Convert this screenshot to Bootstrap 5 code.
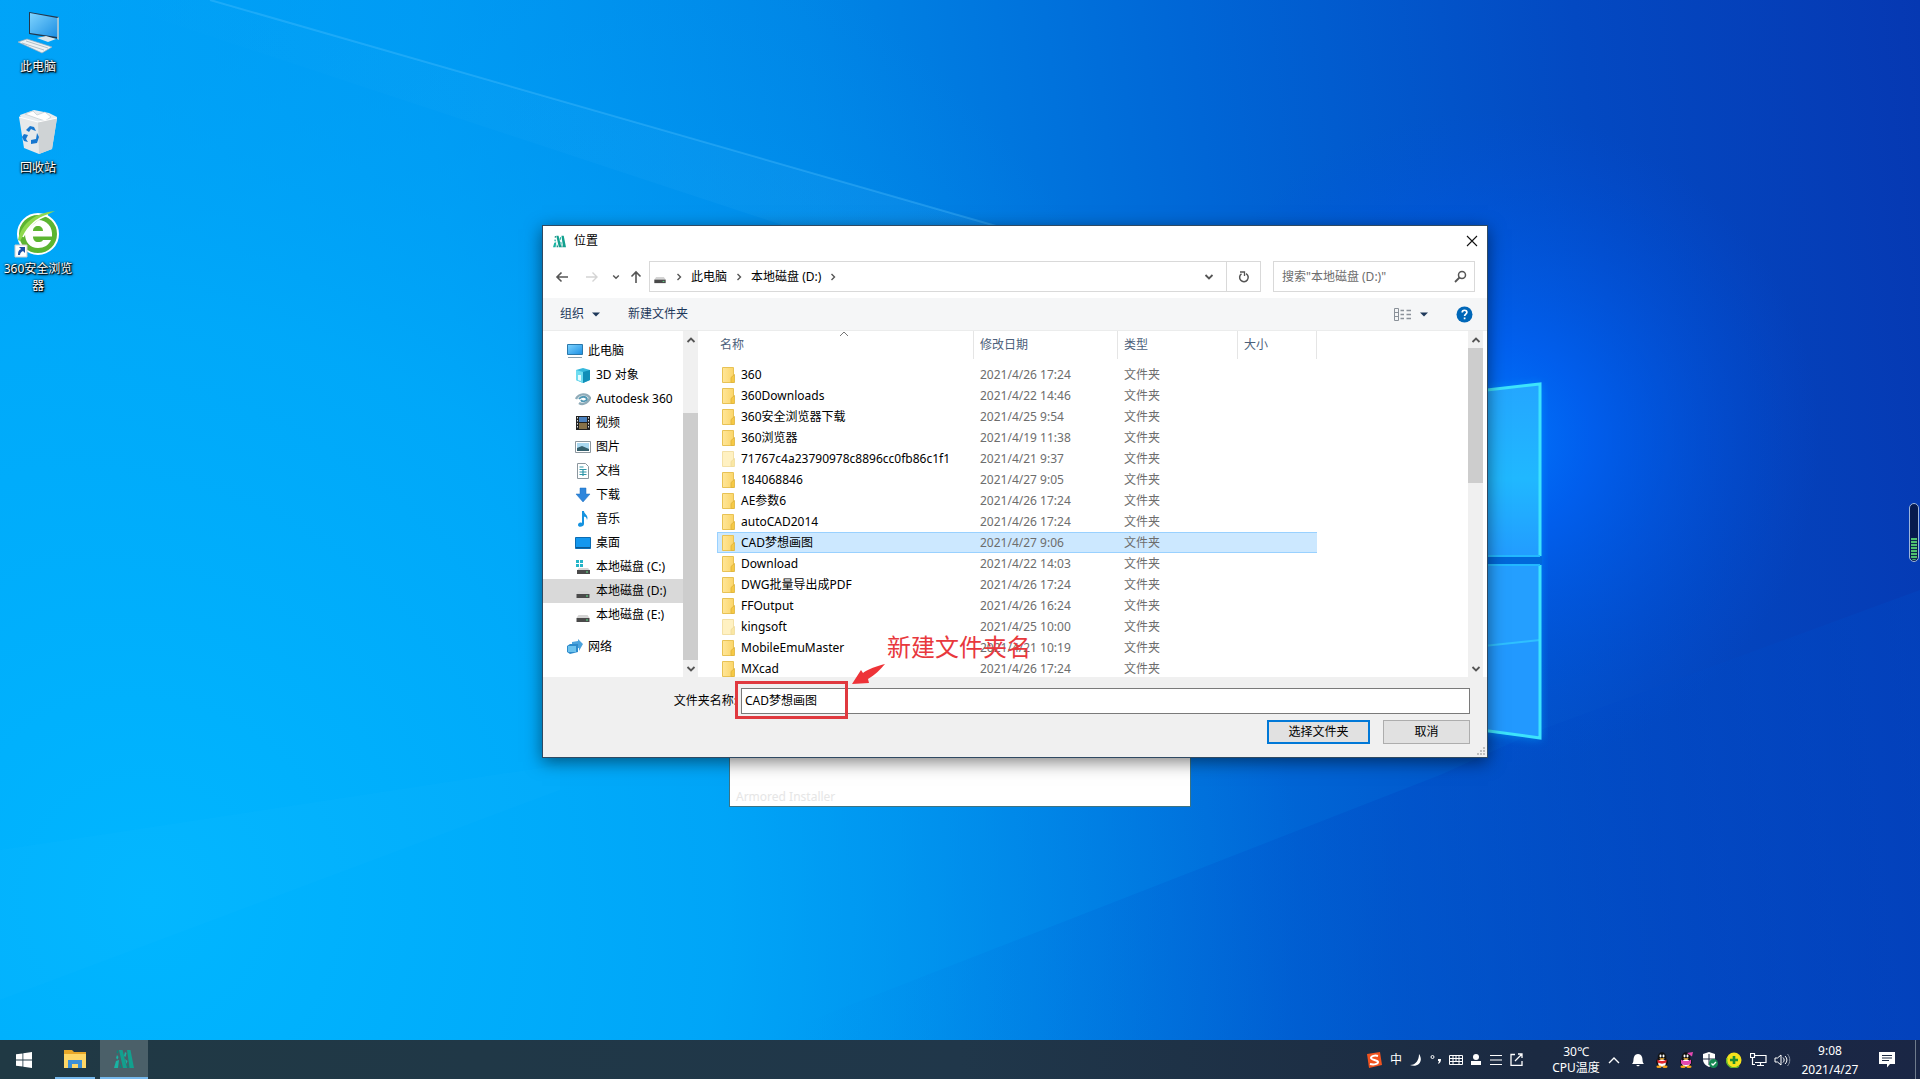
<!DOCTYPE html>
<html lang="zh-CN">
<head>
<meta charset="utf-8">
<meta name="viewport" content="width=device-width, initial-scale=1">
<title>位置</title>
<link href="https://cdn.jsdelivr.net/npm/bootstrap@5.3.0/dist/css/bootstrap.min.css" rel="stylesheet">
<style>
  body { font: 12px/20px "Noto Sans", "Noto Sans CJK SC", sans-serif; color: #000; background: #00a8fa; }
  svg { display: block; flex: none; }
  button { border: 0; background: none; padding: 0; color: inherit; }
  .wallpaper { position: absolute; inset: 0; width: 100%; height: 100%; }

  /* desktop shortcuts */
  .shortcuts { position: relative; width: 76px; padding-top: 8px; gap: 10px; }
  .shortcut { min-height: 91px; color: #fff; text-decoration: none; line-height: 17px; text-shadow: 1px 1px 1px #000, 0 0 2px #000, 1px 1px 3px #000; }
  .shortcut svg { margin-bottom: 2px; }

  /* windows */
  .installer { position: absolute; left: 729px; top: 600px; width: 462px; height: 207px; background: #fff; border: 1px solid #3b7384; padding: 0 6px; color: #e6e6e6; line-height: 18px; }
  .dialog-win { position: absolute; left: 542px; top: 225px; width: 946px; background: #fff; border: 1px solid #2f4a63; box-shadow: 0 4px 16px rgba(0,0,0,.5); }
  .title-row { height: 30px; padding: 0 9px 0 10px; }
  .path-row { height: 42px; padding: 5px 12px 6px 5px; }
  .path-row .nav-b { height: 31px; display: flex; align-items: center; justify-content: center; }
  .w-back { width: 28px; } .w-fwd { width: 32px; } .w-hist { width: 16px; } .w-up { width: 24px; margin-right: 1px; }
  .path-box, .search-box { border: 1px solid #d9d9d9; height: 31px; }
  .path-box { padding-left: 3px; }
  .chev { width: 24px; display: flex; justify-content: center; }
  .refresh { width: 34px; height: 29px; border-left: 1px solid #d9d9d9; }
  .search-box { width: 202px; margin-left: 12px; padding: 0 7px 0 8px; }
  .search-box input { border: 0; outline: 0; width: 100%; min-width: 0; padding: 0; background: none; }
  .search-box input::placeholder { color: #6d6d6d; opacity: 1; }
  .tool-row { height: 33px; background: #f5f6f7; border-bottom: 1px solid #ebecec; padding: 0 14px 0 17px; color: #1e395b; }
  .panes { height: 346px; overflow: hidden; }

  .tree { width: 140px; padding-top: 8px; }
  .tree a { height: 24px; line-height: 24px; display: flex; align-items: center; gap: 5px; padding-left: 32px; color: #000; text-decoration: none; white-space: nowrap; }
  .tree a.root { padding-left: 24px; }
  .tree a.on { background: #d9d9d9; }
  .tree a.net { margin-top: 8px; }
  .sbar { width: 15px; background: #f0f0f0; }
  .sbar .cap { height: 17px; display: flex; align-items: center; justify-content: center; }
  .thumb { background: #cdcdcd; }
  .thumb.low { margin-top: 65px; height: 247px; }
  .thumb.high { height: 135px; }

  .files { padding-left: 19px; position: relative; }
  .files table { width: 600px; table-layout: fixed; border-collapse: separate; border-spacing: 0; }
  .files th { height: 28px; font-weight: 400; color: #4c607a; border-right: 1px solid #e5e5e5; padding: 0 0 0 6px; }
  .files th:first-child { padding-left: 3px; }
  .files .gap-row td { height: 5px; }
  .files td { height: 21px; line-height: 19px; padding: 0 0 0 6px; color: #6d6d6d; border: solid transparent; border-width: 1px 0; white-space: nowrap; }
  .files td:first-child { color: #000; padding-left: 4px; border-left-width: 1px; }
  .files .gap-row td { border: 0; }
  .files tr.sel td { background: #cce8ff; border-color: #99d1ff; }
  .files td svg { display: inline-block; vertical-align: -4px; margin-right: 5px; }
  .c1 { width: 257px; } .c2 { width: 144px; } .c3 { width: 120px; } .c4 { width: 79px; }
  .sort { position: absolute; left: 141px; top: 0; }

  .foot { position: relative; background: #f0f0f0; padding: 11px 17px 13px 0; }
  .foot label { width: 198px; text-align: right; padding-right: 4px; white-space: nowrap; }
  .foot input { height: 26px; border: 1px solid #7a7a7a; padding: 0 3px 2px; background: #fff; outline: 0; }
  .foot .acts { margin-top: 6px; gap: 13px; }
  .foot .acts button { height: 24px; line-height: 20px; background: #e1e1e1; border: 1px solid #adadad; width: 87px; }
  .foot .acts .ok { width: 103px; border: 2px solid #0078d7; line-height: 18px; }
  .grip { position: absolute; right: 1px; bottom: 1px; }

  .note { position: absolute; left: 344px; top: 403px; font-size: 24px; line-height: 36px; color: #e8383d; white-space: nowrap; }
  .note-box { position: absolute; left: 192px; top: 455px; width: 113px; height: 38px; border: 3px solid #e0393f; }
  .note-arrow { position: absolute; left: 308px; top: 437px; }

  .gauge { position: absolute; right: 1px; top: 503px; width: 10px; height: 59px; border: 1px solid #9fb6dc; border-radius: 5px; background: #061a4e; padding: 1px; }
  .gauge div { height: 22px; width: 100%; border-radius: 0 0 3px 3px; background: repeating-linear-gradient(#4fc070 0 2px, #0b2c4e 2px 3px); }

  /* taskbar */
  .task { position: relative; height: 39px; color: #fff; background: linear-gradient(90deg, #203944, #20374a 50%, #1b2a42 80%, #1a2645); }
  .task .cell { height: 39px; display: flex; align-items: center; justify-content: center; }
  .w-start { width: 48px; } .w-app { width: 48px; }
  .run { box-shadow: inset 0 -2px #76b9ed; padding-bottom: 2px; }
  .run-in { width: 40px; margin: 0 5px 0 7px; }
  .lit { background: #4b6069; }
  .ime > * { width: 20px; } .tray > * { width: 24px; }
  .temp { width: 60px; margin-left: 16px; padding-left: 8px; line-height: 16px; }
  .clock { width: 72px; line-height: 19px; }
  .w-msg { width: 41px; margin-right: 8px; }
  .peek { width: 5px; height: 39px; border-left: 1px solid #6f7b8c; }
</style>
</head>
<body class="d-flex flex-column min-vh-100">

<svg width="0" height="0" class="position-absolute" aria-hidden="true">
  <linearGradient id="gf" x1="0" x2="1"><stop offset="0" stop-color="#ffe699"/><stop offset="1" stop-color="#fbd569"/></linearGradient>
  <linearGradient id="gb" x1="0" y1="0" x2="1" y2="1"><stop offset="0" stop-color="#7fd4ff"/><stop offset="1" stop-color="#1c8fe3"/></linearGradient>
  <symbol id="folder" viewBox="0 0 14 16"><path d="M.5 .5h11v15H.5z" fill="url(#gf)" stroke="#e8c254"/><path d="M9 15.500v-5l3.500-3v8z" fill="#f6c945" stroke="#ddb23c" stroke-width=".8"/></symbol>
  <symbol id="folderdim" viewBox="0 0 14 16"><path d="M.5 .5h11v15H.5z" fill="#fff1c2" stroke="#f3e0a6"/><path d="M9 15.500v-5l3.500-3v8z" fill="#fae7a4" stroke="#eeda9c" stroke-width=".8"/></symbol>
  <symbol id="drive" viewBox="0 0 16 16"><path d="M3.500 8h9l2 3h-13z" fill="#d4d4d4"/><path d="M1.500 11h13v4h-13z" fill="#4a4a4a"/><path d="M11 12.500h2v1h-2z" fill="#5fe38a"/></symbol>
  <symbol id="logo" viewBox="0 0 20 20"><path d="M5 1h3.500l4.500 18H9z M13 1h3.500L20 19h-4.500z" fill="#12a08e"/><path d="M3 6l1.500 2-1 2.500L2 9z M2 12l3-1-1 8H0z M11 3l1.500 1-1 4-1.500-1z M11 10l2.500 2-1 3z" fill="#19b3a2"/><path d="M3 1.500h1.500L4 4.500 2.500 4zM6 14l2 5H5.500zM13.500 14l1.500 5h-2z" fill="#0c8579"/></symbol>
  <symbol id="right" viewBox="0 0 8 8"><path d="M2.500 1l3 3-3 3" fill="none" stroke="#555" stroke-width="1.400"/></symbol>
  <symbol id="down" viewBox="0 0 10 10"><path d="M1.500 3L5 6.500 8.500 3" fill="none" stroke="#555" stroke-width="1.800"/></symbol>
  <symbol id="up" viewBox="0 0 10 10"><path d="M1.500 7L5 3.500 8.500 7" fill="none" stroke="#555" stroke-width="1.800"/></symbol>
  <symbol id="tri" viewBox="0 0 8 5"><path d="M0 .5h8L4 4.500z" fill="#1e395b"/></symbol>
  <symbol id="qq" viewBox="0 0 16 16"><ellipse cx="8" cy="10" rx="6" ry="5" fill="#111"/><ellipse cx="8" cy="5" rx="4.300" ry="4.700" fill="#111"/><ellipse cx="8" cy="11" rx="3.800" ry="3.800" fill="#fff"/><ellipse cx="6.500" cy="4" rx="1" ry="1.400" fill="#fff"/><ellipse cx="9.500" cy="4" rx="1" ry="1.400" fill="#fff"/><path d="M5 6.300h6L8 8z" fill="#ffb52b"/><ellipse cx="5" cy="14.700" rx="2.600" ry="1.200" fill="#f9a51a"/><ellipse cx="11" cy="14.700" rx="2.600" ry="1.200" fill="#f9a51a"/></symbol>
</svg>

<main class="flex-grow-1 position-relative overflow-hidden">
  <svg class="wallpaper" viewBox="0 0 1920 1040" preserveAspectRatio="none" aria-hidden="true">
    <defs>
      <linearGradient id="w1" x1="0" y1=".06" x2="1" y2="0">
        <stop offset="0" stop-color="#00a8fa"/><stop offset=".22" stop-color="#009cf4"/><stop offset=".42" stop-color="#0086e6"/><stop offset=".62" stop-color="#0066d6"/><stop offset=".82" stop-color="#0349c2"/><stop offset="1" stop-color="#0638b2"/>
      </linearGradient>
      <radialGradient id="w2" gradientUnits="userSpaceOnUse" cx="1490" cy="440" r="330"><stop offset="0" stop-color="#0078ff"/><stop offset=".3" stop-color="#0064fa" stop-opacity=".75"/><stop offset="1" stop-color="#0050dc" stop-opacity="0"/></radialGradient>
      <radialGradient id="w3" gradientUnits="userSpaceOnUse" cx="150" cy="900" r="1150"><stop offset="0" stop-color="#00b6ff"/><stop offset=".5" stop-color="#00aafa" stop-opacity=".8"/><stop offset="1" stop-color="#0090f0" stop-opacity="0"/></radialGradient>
      <linearGradient id="w4" x1="0" x2="0" y1="0" y2="1"><stop offset="0" stop-color="#24a6ff"/><stop offset=".55" stop-color="#20b8ff"/><stop offset="1" stop-color="#229cff"/></linearGradient>
      <linearGradient id="w5" gradientUnits="userSpaceOnUse" x1="800" y1="0" x2="1400" y2="0"><stop offset="0" stop-color="#0070e0" stop-opacity="0"/><stop offset="1" stop-color="#0048c4" stop-opacity=".4"/></linearGradient>
      <linearGradient id="w6" x1="0" x2="1"><stop offset="0" stop-color="#5cc8ff" stop-opacity="0"/><stop offset="1" stop-color="#5cc8ff" stop-opacity=".1"/></linearGradient>
      <filter id="soft"><feGaussianBlur stdDeviation="5"/></filter>
    </defs>
    <path fill="url(#w1)" d="M0 0h1920v1040H0z"/>
    <path fill="url(#w3)" d="M0 0h1920v1040H0z"/>
    <path fill="url(#w5)" d="M1540 730L1440 775L760 1040H1920V590z"/>
    <path fill="url(#w2)" d="M0 0h1920v1040H0z"/>
    <path d="M210 0L1010 230V300L100 0z" fill="url(#w6)"/>
    <path d="M210 0L1010 230" stroke="#5cc8ff" stroke-opacity=".3" stroke-width="2"/>
    <path d="M0 850L560 765V790L0 1000z" fill="#35c4ff" opacity=".06"/>
    <path d="M1480 390l61-6v178h-61z M1480 564h61v176l-61-8z" fill="#00a0ff" opacity=".6" filter="url(#soft)"/>
    <path d="M1400 400L1540 384V556H1400z" fill="url(#w4)"/>
    <path d="M1400 565H1540V738L1400 722z" fill="#2299ff"/>
    <path d="M1400 565H1540V640L1400 655z" fill="#249fff"/>
    <path d="M1400 655L1540 640" stroke="#2fc0ff" stroke-width="2"/>
    <path d="M1400 400L1540 384V556 M1540 565V738L1400 719" fill="none" stroke="#3de3fb" stroke-width="3"/>
    <path d="M1400 556H1540M1400 565H1540" stroke="#22b8ff" stroke-width="2"/>
    <path d="M1400 560.500h142" stroke="#0068da" stroke-width="7"/>
  </svg>

  <nav class="shortcuts d-flex flex-column" aria-label="桌面">
    <a href="#" class="shortcut d-flex flex-column align-items-center text-center">
      <svg width="48" height="48" viewBox="0 0 48 48"><path d="M15 4l30 5v22L15 26z" fill="#23374c"/><path d="M16 5l27 5v19L16 25z" fill="url(#gb)"/><path d="M43 10l2-1v23l-2-1z" fill="#9cc3d8"/><path d="M23 30l9-2 10 3-8 3z" fill="#dce5ea"/><path d="M4 34l9-3 25 8-10 6z" fill="#eef2f4" stroke="#9ab" stroke-width=".7"/><path d="M8 35l22 7M12 33l22 7" stroke="#a5b3bd" stroke-width=".8"/></svg>
      此电脑</a>
    <a href="#" class="shortcut d-flex flex-column align-items-center text-center">
      <svg width="48" height="48" viewBox="0 0 48 48"><path d="M6 6l14-5 15 3 8 4-2 8H8z" fill="#e8edf0"/><path d="M11 5l8-3 4 4 8-3 6 5-6 4-9-3z" fill="#fff" stroke="#b7c2c9" stroke-width=".6"/><path d="M5 8l19 5 19-4-5 31-13 5-15-6z" fill="#e6e9eb"/><path d="M24 13l19-4-5 31-13 5z" fill="#cfd3d5"/><path d="M5 8l19 5 19-4" fill="none" stroke="#fff"/><path d="M12 21l4-4 4 1 2 4-3-1-2-1-2 3zM10 25l4 1-2 4 2 3-4-1-2-4zM17 31l5-1 1-6 2 4-2 6-6 1z" fill="#1777cf"/></svg>
      回收站</a>
    <a href="#" class="shortcut d-flex flex-column align-items-center text-center">
      <svg width="48" height="48" viewBox="0 0 48 48"><circle cx="24" cy="24" r="20" fill="#5cb531" stroke="#fff" stroke-width="2"/><path d="M24 10c-8 0-13 6-13 14s5 14 13 14c6 0 11-3 13-8h-8c-1 2-3 2-5 2-3 0-5-2-5-5.500h19C39 17 33 10 24 10zM19 21c0-3 2-5 5-5s5 2 5 5z" fill="#fff"/><path d="M4 30C8 12 22 3 41 1 30 6 15 14 6 31z" fill="#8fd94e"/><path d="M9 27C15 15 24 8 34 5" stroke="#fff" stroke-width="1.500" fill="none"/><path d="M1 35h12v12H1z" fill="#fff" stroke="#ccc"/><path d="M4 45c0-4 1-5 3-6l-2-2h6v6l-2-2c-2 1-3 2-3 4z" fill="#1d4fa3"/></svg>
      360安全浏览器</a>
  </nav>

  <section class="installer d-flex align-items-end">Armored Installer</section>

  <section class="dialog-win" role="dialog" aria-label="位置">
    <div class="title-row d-flex align-items-center">
      <svg width="13" height="13" class="me-1"><use href="#logo"/></svg>
      <span class="ps-1">位置</span>
      <button class="ms-auto" aria-label="关闭"><svg width="12" height="12" viewBox="0 0 12 12"><path d="M1 1l10 10M11 1L1 11" stroke="#111" stroke-width="1.100"/></svg></button>
    </div>

    <div class="path-row d-flex align-items-center">
      <button class="nav-b w-back" aria-label="后退"><svg width="14" height="12" viewBox="0 0 14 12"><path d="M13 6H2M6.500 1.500L2 6l4.500 4.500" fill="none" stroke="#555" stroke-width="1.600"/></svg></button>
      <button class="nav-b w-fwd" aria-label="前进"><svg width="14" height="12" viewBox="0 0 14 12"><path d="M1 6h11M7.500 1.500L12 6l-4.500 4.500" fill="none" stroke="#d4d4d4" stroke-width="1.400"/></svg></button>
      <button class="nav-b w-hist" aria-label="最近的位置"><svg width="8" height="8"><use href="#down"/></svg></button>
      <button class="nav-b w-up" aria-label="上一级"><svg width="12" height="14" viewBox="0 0 12 14"><path d="M6 13V2M1.500 6.500L6 2l4.500 4.500" fill="none" stroke="#555" stroke-width="1.600"/></svg></button>
      <div class="path-box flex-grow-1 d-flex align-items-center">
        <svg width="14" height="14"><use href="#drive"/></svg>
        <span class="chev"><svg width="8" height="8"><use href="#right"/></svg></span>
        <button>此电脑</button>
        <span class="chev"><svg width="8" height="8"><use href="#right"/></svg></span>
        <button>本地磁盘 (D:)</button>
        <span class="chev"><svg width="8" height="8"><use href="#right"/></svg></span>
        <button class="ms-auto me-2 pe-1" aria-label="展开"><svg width="10" height="10"><use href="#down"/></svg></button>
        <button class="refresh d-flex align-items-center justify-content-center" aria-label="刷新"><svg width="12" height="12" viewBox="0 0 12 12"><path d="M3.500 2.800A4.300 4.300 0 1 0 8 2.600" fill="none" stroke="#555" stroke-width="1.500"/><path d="M2 1h4.500v4" fill="none" stroke="#555" stroke-width="1.300"/></svg></button>
      </div>
      <div class="search-box d-flex align-items-center">
        <input type="text" aria-label="搜索" placeholder='搜索"本地磁盘 (D:)"'>
        <svg width="13" height="13" viewBox="0 0 13 13"><circle cx="8" cy="5" r="3.500" fill="none" stroke="#555" stroke-width="1.500"/><path d="M5.500 7.500L1 12" stroke="#555" stroke-width="1.800"/></svg>
      </div>
    </div>

    <div class="tool-row d-flex align-items-center">
      <button class="d-flex align-items-center me-4">组织<svg width="8" height="5" class="ms-2 me-1"><use href="#tri"/></svg></button>
      <button>新建文件夹</button>
      <button class="ms-auto d-flex align-items-center" aria-label="更改视图">
        <svg width="18" height="13" viewBox="0 0 18 13"><path d="M.5 .5h4v12h-4zM.5 4.500h4M.5 8.500h4" fill="none" stroke="#8a9199"/><path d="M6.500 2.500H10M12.500 2.500H17M6.500 6.500H10M12.500 6.500H17M6.500 10.500H10M12.500 10.500H17" stroke="#8a9199" stroke-width="1.300"/></svg>
        <svg width="8" height="5" class="ms-2"><use href="#tri"/></svg></button>
      <button class="ms-4 ps-1" aria-label="帮助"><svg width="17" height="17" viewBox="0 0 17 17"><circle cx="8.500" cy="8.500" r="8" fill="#0067b8"/><path d="M6.200 6.600c0-3.200 4.700-3 4.700-.3 0 1.800-2.300 1.800-2.300 3.700M8.600 11.500v1.800" fill="none" stroke="#fff" stroke-width="1.700"/></svg></button>
    </div>

    <div class="panes d-flex">
      <nav class="tree" aria-label="导航窗格">
        <a href="#" class="root"><svg width="16" height="16" viewBox="0 0 16 16"><path d="M.5 1.500h15v10H.5z" fill="url(#gb)" stroke="#2a78ab"/><path d="M1 14.500h14" stroke="#8aa0ae"/></svg>此电脑</a>
        <a href="#"><svg width="16" height="16" viewBox="0 0 16 16"><path d="M1 3l7-2 7 2v10l-7 3-7-3z" fill="#35b8dc"/><path d="M1 3l7 2v11l-7-3z" fill="#6fdcf0"/><path d="M8 5l7-2v10l-7 3z" fill="#118fb8"/><path d="M3 8h3v6l-3-1z" fill="#e5fbff"/></svg>3D 对象</a>
        <a href="#"><svg width="16" height="16" viewBox="0 0 16 16"><path d="M1 8c3-6 11-6 14-1-3 6-8 7-11 5" fill="none" stroke="#8fabb8" stroke-width="2.400"/><path d="M4 8c2-3 7-3 8 0-1 3-5 3-6 1" fill="none" stroke="#4f97b4" stroke-width="1.800"/></svg>Autodesk 360</a>
        <a href="#"><svg width="16" height="16" viewBox="0 0 16 16"><path d="M1 1h14v14H1z" fill="#222"/><path d="M4 2h8v5H4z" fill="#4b82c0"/><path d="M4 8h8v6H4z" fill="#877249"/><path d="M2.500 2v12M13.500 2v12" stroke="#ddd" stroke-dasharray="1.500 1.500"/></svg>视频</a>
        <a href="#"><svg width="16" height="16" viewBox="0 0 16 16"><path d="M.5 2.500h15v11H.5z" fill="#fff" stroke="#8c979e"/><path d="M2 4h12v8H2z" fill="#a9d8f0"/><path d="M2 9l5-2 7 3v2H2z" fill="#35606d"/></svg>图片</a>
        <a href="#"><svg width="16" height="16" viewBox="0 0 16 16"><path d="M2.500 .5h8l3 3v12h-11z" fill="#fff" stroke="#8c979e"/><path d="M4.500 4h4M4.500 6.500h7M4.500 9h7M4.500 11.500h7M8 6v7" stroke="#2f96a8" stroke-width="1.200"/></svg>文档</a>
        <a href="#"><svg width="16" height="16" viewBox="0 0 16 16"><path d="M5 1h6v6h4l-7 8-7-8h4z" fill="#2e86dc" stroke="#1d6dbd" stroke-width=".5"/></svg>下载</a>
        <a href="#"><svg width="16" height="16" viewBox="0 0 16 16"><path d="M7 0h2c0 3 5 4 3 9-.5-3-1.500-3-3-3.500V13c0 3-6 4-6 1 0-2 2-3 4-2z" fill="#1593e0"/></svg>音乐</a>
        <a href="#"><svg width="16" height="16" viewBox="0 0 16 16"><path d="M.5 2.500h15v11H.5z" fill="#1397ee" stroke="#0c6cb2"/><path d="M1 12.500h14" stroke="#0a5790"/></svg>桌面</a>
        <a href="#"><svg width="16" height="16" viewBox="0 0 16 16"><path d="M1 1h3v3H1zM5 1h3v3H5zM1 5h3v3H1zM5 5h3v3H5z" fill="#25b5c8"/><path d="M4 9h9l2 2.500H2z" fill="#d4d4d4"/><path d="M2 11h13v4H2z" fill="#4a4a4a"/><path d="M11 12.500h2v1h-2z" fill="#5fe38a"/></svg>本地磁盘 (C:)</a>
        <a href="#" class="on"><svg width="16" height="16"><use href="#drive"/></svg>本地磁盘 (D:)</a>
        <a href="#"><svg width="16" height="16"><use href="#drive"/></svg>本地磁盘 (E:)</a>
        <a href="#" class="root net"><svg width="16" height="16" viewBox="0 0 16 16"><path d="M5 3l6-1V0l5 5-4 7V9L5 10z" fill="#4ba3dd"/><path d="M0 7l3-2h8v8l-8 2-3-2z" fill="#2e8bcb"/><path d="M1 7h8v6H1z" fill="#6cc2ee"/></svg>网络</a>
      </nav>
      <div class="sbar"><div class="cap"><svg width="10" height="10"><use href="#up"/></svg></div><div class="thumb low"></div><div class="cap"><svg width="10" height="10"><use href="#down"/></svg></div></div>

      <div class="files flex-grow-1">
        <svg class="sort" width="10" height="6" viewBox="0 0 10 6"><path d="M1 5l4-4 4 4" fill="none" stroke="#777"/></svg>
        <table>
          <colgroup><col class="c1"><col class="c2"><col class="c3"><col class="c4"></colgroup>
          <thead><tr><th>名称</th><th>修改日期</th><th>类型</th><th>大小</th></tr></thead>
          <tbody>
          <tr class="gap-row"><td colspan="4"></td></tr>
          <tr><td><svg width="14" height="16"><use href="#folder"/></svg>360</td><td>2021/4/26 17:24</td><td>文件夹</td><td></td></tr>
          <tr><td><svg width="14" height="16"><use href="#folder"/></svg>360Downloads</td><td>2021/4/22 14:46</td><td>文件夹</td><td></td></tr>
          <tr><td><svg width="14" height="16"><use href="#folder"/></svg>360安全浏览器下载</td><td>2021/4/25 9:54</td><td>文件夹</td><td></td></tr>
          <tr><td><svg width="14" height="16"><use href="#folder"/></svg>360浏览器</td><td>2021/4/19 11:38</td><td>文件夹</td><td></td></tr>
          <tr><td><svg width="14" height="16"><use href="#folderdim"/></svg>71767c4a23790978c8896cc0fb86c1f1</td><td>2021/4/21 9:37</td><td>文件夹</td><td></td></tr>
          <tr><td><svg width="14" height="16"><use href="#folder"/></svg>184068846</td><td>2021/4/27 9:05</td><td>文件夹</td><td></td></tr>
          <tr><td><svg width="14" height="16"><use href="#folder"/></svg>AE参数6</td><td>2021/4/26 17:24</td><td>文件夹</td><td></td></tr>
          <tr><td><svg width="14" height="16"><use href="#folder"/></svg>autoCAD2014</td><td>2021/4/26 17:24</td><td>文件夹</td><td></td></tr>
          <tr class="sel"><td><svg width="14" height="16"><use href="#folder"/></svg>CAD梦想画图</td><td>2021/4/27 9:06</td><td>文件夹</td><td></td></tr>
          <tr><td><svg width="14" height="16"><use href="#folder"/></svg>Download</td><td>2021/4/22 14:03</td><td>文件夹</td><td></td></tr>
          <tr><td><svg width="14" height="16"><use href="#folder"/></svg>DWG批量导出成PDF</td><td>2021/4/26 17:24</td><td>文件夹</td><td></td></tr>
          <tr><td><svg width="14" height="16"><use href="#folder"/></svg>FFOutput</td><td>2021/4/26 16:24</td><td>文件夹</td><td></td></tr>
          <tr><td><svg width="14" height="16"><use href="#folderdim"/></svg>kingsoft</td><td>2021/4/25 10:00</td><td>文件夹</td><td></td></tr>
          <tr><td><svg width="14" height="16"><use href="#folder"/></svg>MobileEmuMaster</td><td>2021/4/21 10:19</td><td>文件夹</td><td></td></tr>
          <tr><td><svg width="14" height="16"><use href="#folder"/></svg>MXcad</td><td>2021/4/26 17:24</td><td>文件夹</td><td></td></tr>
          </tbody>
        </table>
      </div>
      <div class="sbar me-1 d-flex flex-column"><div class="cap"><svg width="10" height="10"><use href="#up"/></svg></div><div class="thumb high"></div><div class="cap mt-auto"><svg width="10" height="10"><use href="#down"/></svg></div></div>
    </div>

    <form class="foot" onsubmit="return false">
      <div class="d-flex align-items-center">
        <label for="folder-name">文件夹名称:</label>
        <input id="folder-name" type="text" class="flex-grow-1" value="CAD梦想画图">
      </div>
      <div class="acts d-flex justify-content-end">
        <button class="ok">选择文件夹</button>
        <button type="button">取消</button>
      </div>
      <svg class="grip" width="10" height="10" viewBox="0 0 10 10"><path d="M7 1h2v2H7zM4 4h2v2H4zM7 4h2v2H7zM1 7h2v2H1zM4 7h2v2H4zM7 7h2v2H7z" fill="#bfbfbf"/></svg>
    </form>

    <div class="note">新建文件夹名</div>
    <svg class="note-arrow" width="36" height="22" viewBox="0 0 36 22"><path d="M34 1C26 3 17 6 12 10L10 7 1 21l17-1-1-4C24 12 29 7 34 1z" fill="#ee3338"/></svg>
    <div class="note-box"></div>
  </section>

  <div class="gauge d-flex align-items-end" aria-hidden="true"><div></div></div>
</main>

<footer class="task d-flex">
  <button class="cell w-start" aria-label="开始"><svg width="16" height="16" viewBox="0 0 16 16"><path d="M0 2.300L6.500 1.400v6.200H0zM7.300 1.300L16 0v7.600H7.300zM0 8.400h6.500v6.200L0 13.700zM7.300 8.400H16V16l-8.700-1.300z" fill="#fff"/></svg></button>
  <button class="cell run run-in" aria-label="文件资源管理器"><svg width="22" height="18" viewBox="0 0 22 18"><path d="M0 0h8l2 2h12v16H0z" fill="#e9a829"/><path d="M0 4h22v14H0z" fill="#ffd766"/><path d="M4 10h14v8h-4v-4H8v4H4z" fill="#3d8fd6"/></svg></button>
  <button class="cell w-app lit run" aria-label="安装程序"><svg width="20" height="20"><use href="#logo"/></svg></button>

  <div class="ime d-flex ms-auto">
    <div class="cell pe-1"><svg width="16" height="16" viewBox="0 0 16 16"><path d="M1 2l13-2 2 13-13 3z" fill="#f0531f"/><path d="M12 4C9 3 5 4 5 6s7 2 7 4-4 3-8 2" fill="none" stroke="#fff" stroke-width="2"/></svg></div>
    <div class="cell">中</div>
    <div class="cell"><svg width="12" height="12" viewBox="0 0 12 12"><path d="M9 0c5 7-1 14-9 11C6 11 9 6 9 0z" fill="#fff"/></svg></div>
    <div class="cell"><svg width="12" height="12" viewBox="0 0 12 12"><circle cx="2.500" cy="3" r="1.500" fill="none" stroke="#fff"/><path d="M8 5h3c0 3-1 4-3 5l1-3H8z" fill="#fff"/></svg></div>
    <div class="cell"><svg width="14" height="12" viewBox="0 0 14 12"><path d="M.5 1.500h13v9H.5zM.5 4.500h13M.5 7.500h13M4 1.500v9M7 1.500v6M10 1.500v9" fill="none" stroke="#fff"/></svg></div>
    <div class="cell"><svg width="12" height="12" viewBox="0 0 12 12"><circle cx="6" cy="3" r="3" fill="#fff"/><path d="M1 7h10v4H1z" fill="#fff"/></svg></div>
    <div class="cell"><svg width="14" height="12" viewBox="0 0 14 12"><path d="M1 1.500h12M1 6h12M1 10.500h12" stroke="#fff" stroke-width="1.200"/></svg></div>
    <div class="cell"><svg width="13" height="13" viewBox="0 0 13 13"><path d="M5 1.500H1v11h11V8M5 8l7-7M8 1h4v4" fill="none" stroke="#fff" stroke-width="1.300"/></svg></div>
  </div>
  <div class="temp d-flex flex-column justify-content-center text-center"><span>30℃</span><span>CPU温度</span></div>
  <div class="tray d-flex">
    <button class="cell" aria-label="显示隐藏的图标"><svg width="12" height="8" viewBox="0 0 12 8"><path d="M1 7l5-5 5 5" fill="none" stroke="#fff" stroke-width="1.400"/></svg></button>
    <div class="cell"><svg width="14" height="14" viewBox="0 0 14 14"><path d="M1 11c2-2 1-4 2-7 1-4 7-4 8 0 1 3 0 5 2 7zM5 12h4l-2 1.500z" fill="#fff"/></svg></div>
    <div class="cell"><svg width="16" height="16" viewBox="0 0 16 16"><use href="#qq"/><path d="M3.500 7.500c3 2 6 2 9 0v3c-3 1.500-6 1.500-9 0z" fill="#e4262c"/></svg></div>
    <div class="cell"><svg width="16" height="16" viewBox="0 0 16 16"><use href="#qq"/><path d="M3 7.500c3 2 7 2 10 0v4c-3 2-7 2-10 0zM9 1l6-1-1 4.500z" fill="#e549b0"/></svg></div>
    <div class="cell"><svg width="16" height="16" viewBox="0 0 16 16"><path d="M7 0l6 2v5c0 4-2 6-6 8-4-2-6-4-6-8V2z" fill="#fff"/><path d="M7 2v11M1 7h12" stroke="#1c2b42"/><circle cx="11.500" cy="11.500" r="4.500" fill="#168a53"/><path d="M9.500 11.500l1.500 1.500 3-3" stroke="#fff" fill="none" stroke-width="1.300"/></svg></div>
    <div class="cell"><svg width="16" height="16" viewBox="0 0 16 16"><circle cx="8" cy="8" r="7.500" fill="#f4e21c"/><path d="M1 6a7.500 7.500 0 0 0 12 8" fill="none" stroke="#67b92c" stroke-width="1.500"/><path d="M8 4v8M4 8h8" stroke="#1d8b30" stroke-width="2.600"/></svg></div>
    <div class="cell"><svg width="17" height="15" viewBox="0 0 17 15"><path d="M5 3.500h11v7H5M10.500 10.500v3M7 13.500h7M.5 1.500h4v4h-4zM2.500 5.500v7H5" fill="none" stroke="#fff" stroke-width="1.200"/></svg></div>
    <div class="cell"><svg width="17" height="14" viewBox="0 0 17 14"><path d="M1 5h2.500L7 2v10L3.500 9H1z" fill="none" stroke="#fff"/><path d="M9 4.500c1.500 1.500 1.500 3.500 0 5M11 3c2.500 2.500 2.500 5.500 0 8" fill="none" stroke="#fff"/><path d="M13.500 1c3 3.500 3 8.500 0 12" fill="none" stroke="#8a94a5"/></svg></div>
  </div>
  <div class="clock d-flex flex-column justify-content-center text-center"><span>9:08</span><span>2021/4/27</span></div>
  <button class="cell w-msg" aria-label="通知"><svg width="16" height="16" viewBox="0 0 16 16"><path d="M0 0h16v12h-5l-3 3.500V12H0z" fill="#fff"/><path d="M3 3.500h10M3 6h10M3 8.500h7" stroke="#1c2a42"/></svg></button>
  <button class="peek" aria-label="显示桌面"></button>
</footer>

<script src="https://cdn.jsdelivr.net/npm/bootstrap@5.3.0/dist/js/bootstrap.bundle.min.js"></script>
</body>
</html>
